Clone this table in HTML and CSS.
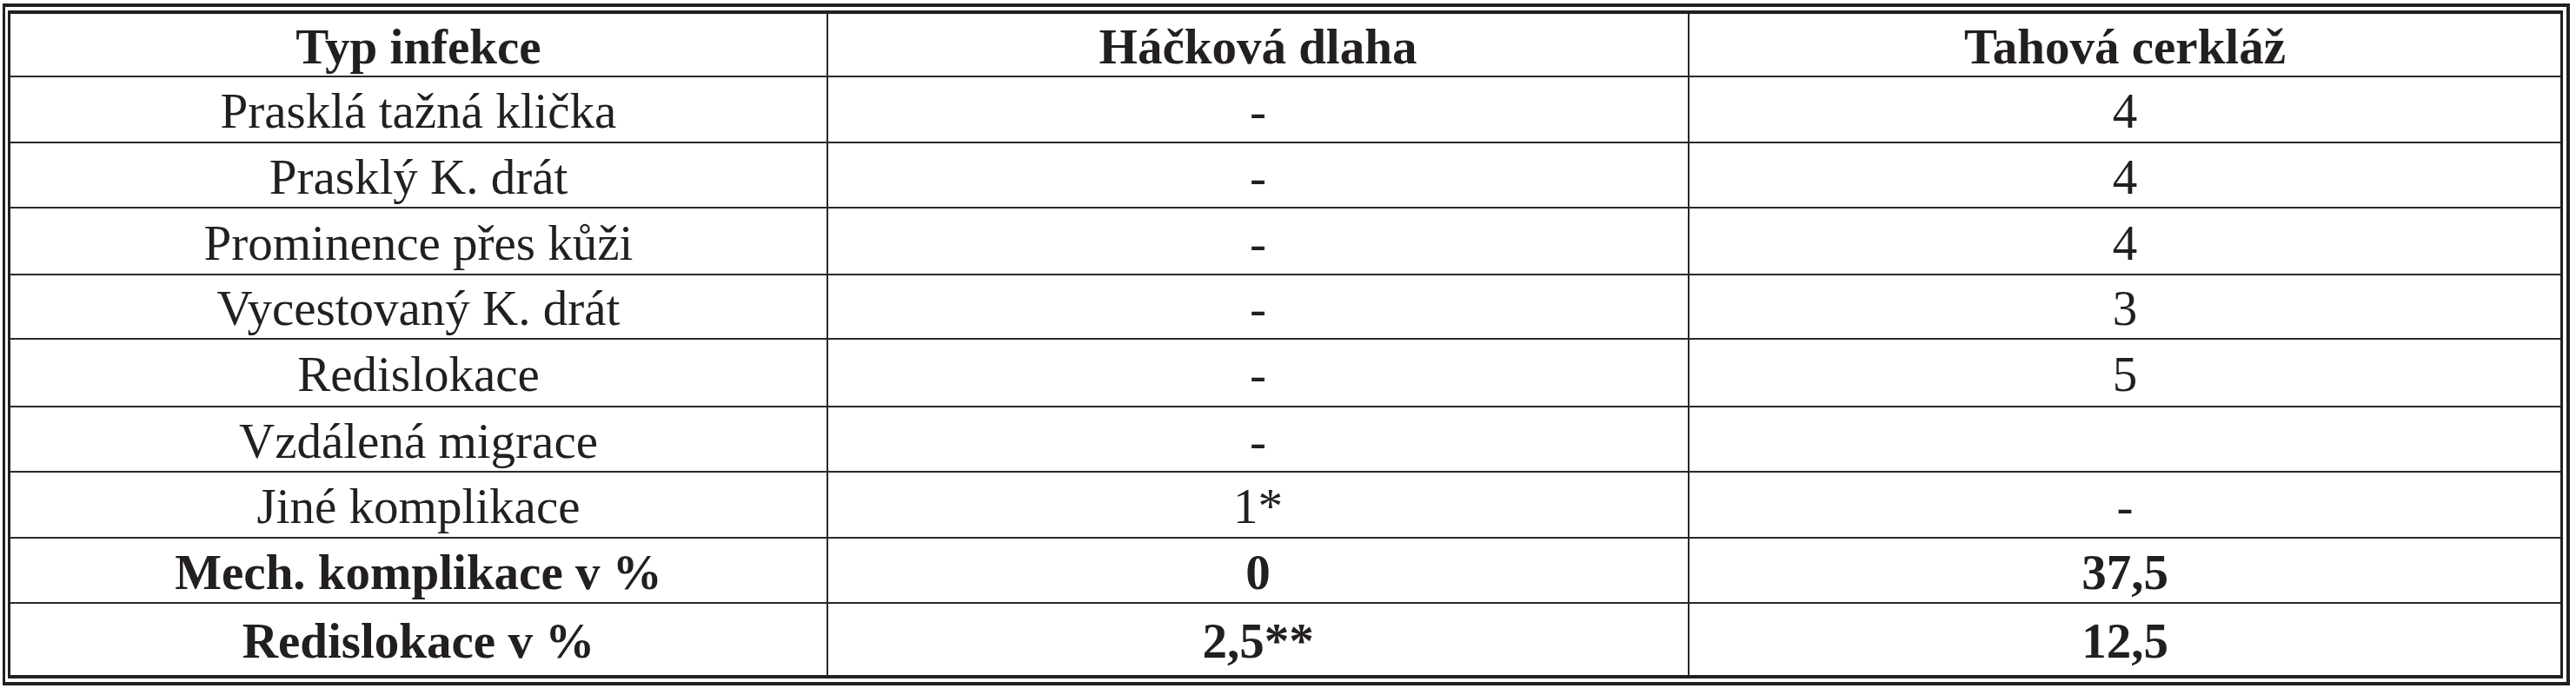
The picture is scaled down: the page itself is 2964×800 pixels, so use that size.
FILE: index.html
```html
<!DOCTYPE html>
<html lang="cs">
<head>
<meta charset="utf-8">
<title>Komplikace</title>
<link rel="stylesheet" href="styles.css">
</head>
<body>
<div class="frame">
  <div class="table">
    <div class="cell head">Typ infekce</div>
    <div class="cell head">Háčková dlaha</div>
    <div class="cell head last-col">Tahová cerkláž</div>

    <div class="cell">Prasklá tažná klička</div>
    <div class="cell">-</div>
    <div class="cell last-col">4</div>

    <div class="cell">Prasklý K. drát</div>
    <div class="cell">-</div>
    <div class="cell last-col">4</div>

    <div class="cell">Prominence přes kůži</div>
    <div class="cell">-</div>
    <div class="cell last-col">4</div>

    <div class="cell">Vycestovaný K. drát</div>
    <div class="cell">-</div>
    <div class="cell last-col">3</div>

    <div class="cell">Redislokace</div>
    <div class="cell">-</div>
    <div class="cell last-col">5</div>

    <div class="cell">Vzdálená migrace</div>
    <div class="cell">-</div>
    <div class="cell last-col"></div>

    <div class="cell">Jiné komplikace</div>
    <div class="cell">1*</div>
    <div class="cell last-col">-</div>

    <div class="cell bold">Mech. komplikace v %</div>
    <div class="cell bold">0</div>
    <div class="cell bold last-col">37,5</div>

    <div class="cell bold last-row">Redislokace v %</div>
    <div class="cell bold last-row">2,5**</div>
    <div class="cell bold last-row last-col">12,5</div>
  </div>
</div>
</body>
</html>
```

FILE: styles.css
```css
html, body {
  margin: 0;
  padding: 0;
  background: #ffffff;
}

body {
  padding: 4px 0 0 3px;
  font-family: "Liberation Serif", "Times New Roman", serif;
  color: #231f20;
}

.frame {
  width: 2940px;
  border-style: solid;
  border-color: #231f20;
  border-width: 4px 4px 4px 3px;
  padding: 4px 4px 4px 3px;
}

.table {
  display: grid;
  grid-template-columns: 941px 991px 1002px;
  grid-template-rows: 73px 76px 75px 77px 74px 78px 75px 76px 75px 82px;
  border-style: solid;
  border-color: #231f20;
  border-width: 4px 3px 4px 3px;
}

.cell {
  box-sizing: border-box;
  display: flex;
  align-items: center;
  justify-content: center;
  padding-top: 3px;
  font-size: 57px;
  line-height: 1;
  border-right: 2px solid #2b2829;
  border-bottom: 2px solid #2b2829;
  white-space: nowrap;
}

.last-col {
  border-right: none;
}

.last-row {
  border-bottom: none;
}

.head,
.bold {
  font-weight: bold;
}
```
